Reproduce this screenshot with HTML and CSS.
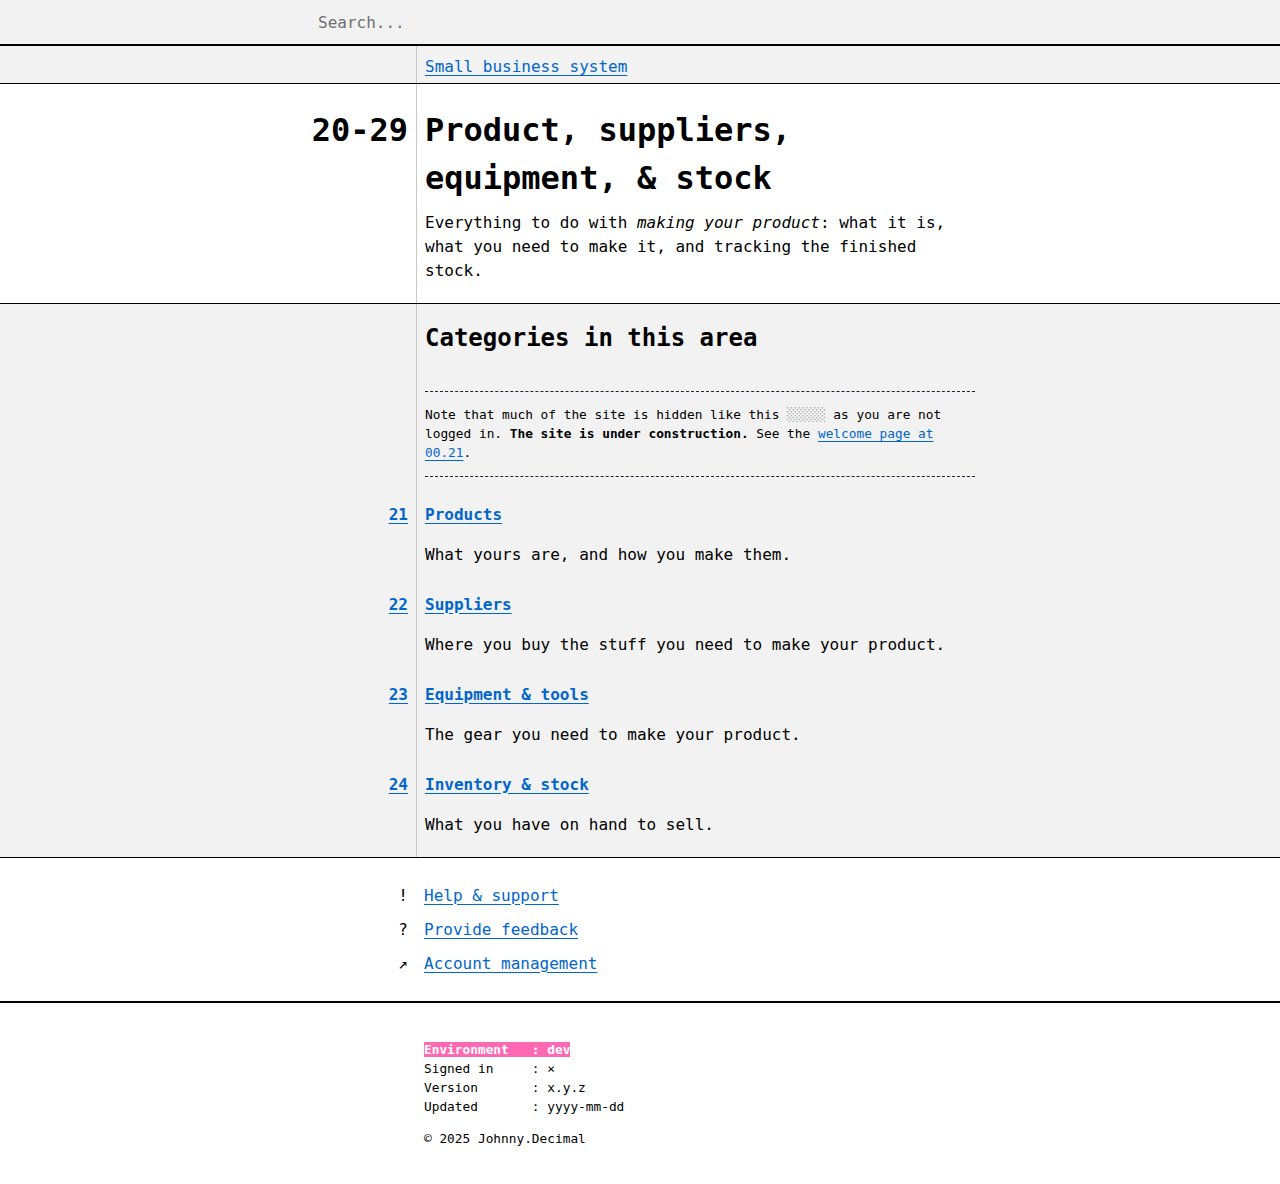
FILE: index.html
```html
<!DOCTYPE html>
<html lang="en">
<head>
<meta charset="utf-8">
<title>20-29 Product, suppliers, equipment, &amp; stock</title>
<link rel="stylesheet" href="styles.css">
</head>
<body>
<header class="search">
  <input class="search-input" type="text" placeholder="Search...">
</header>

<nav class="row crumbs">
  <div class="gutter"></div>
  <div class="main"><a href="#">Small business system</a></div>
</nav>

<section class="row area">
  <div class="gutter"><span class="area-num">20-29</span></div>
  <div class="main">
    <h1 class="title">Product, suppliers, equipment, &amp; stock</h1>
    <p class="lede">Everything to do with <em>making your product</em>: what it is, what you need to make it, and tracking the finished stock.</p>
  </div>
</section>

<section class="cats">
  <div class="row cats-head">
    <div class="gutter"></div>
    <div class="main">
      <h2 class="cats-title">Categories in this area</h2>
      <div class="notice">Note that much of the site is hidden like this <span class="hidden-mark">░░░░░</span> as you are not logged in. <strong>The site is under construction.</strong> See the <a href="#">welcome page at 00.21</a>.</div>
    </div>
  </div>
  <div class="row cat-item">
    <div class="gutter"><a class="cat-num" href="#">21</a></div>
    <div class="main"><a class="cat-link" href="#">Products</a><p>What yours are, and how you make them.</p></div>
  </div>
  <div class="row cat-item">
    <div class="gutter"><a class="cat-num" href="#">22</a></div>
    <div class="main"><a class="cat-link" href="#">Suppliers</a><p>Where you buy the stuff you need to make your product.</p></div>
  </div>
  <div class="row cat-item">
    <div class="gutter"><a class="cat-num" href="#">23</a></div>
    <div class="main"><a class="cat-link" href="#">Equipment &amp; tools</a><p>The gear you need to make your product.</p></div>
  </div>
  <div class="row cat-item last">
    <div class="gutter"><a class="cat-num" href="#">24</a></div>
    <div class="main"><a class="cat-link" href="#">Inventory &amp; stock</a><p>What you have on hand to sell.</p></div>
  </div>
</section>

<section class="links">
  <div class="link-row"><span class="link-icon">!</span><a href="#">Help &amp; support</a></div>
  <div class="link-row"><span class="link-icon">?</span><a href="#">Provide feedback</a></div>
  <div class="link-row"><span class="link-icon arrow">↗</span><a href="#">Account management</a></div>
</section>

<footer class="site-footer">
<pre class="meta"><span class="env">Environment   : dev</span>
Signed in     : ×
Version       : x.y.z
Updated       : yyyy-mm-dd</pre>
<p class="copy">© 2025 Johnny.Decimal</p>
</footer>
</body>
</html>
```

FILE: styles.css
```css
* { box-sizing: border-box; }

html, body {
  margin: 0;
  padding: 0;
  background: #fff;
  color: #000;
  font-family: "DejaVu Sans Mono", "Liberation Mono", monospace;
  font-size: 16px;
  line-height: 24px;
}

a { color: #0066cc; text-decoration: underline; text-underline-offset: 3px; }

.search {
  height: 46px;
  background: #f2f2f2;
  border-bottom: 2px solid #000;
  display: flex;
  align-items: center;
}
.search-input {
  margin-left: 310px;
  padding: 0 8px;
  border: none;
  background: transparent;
  font-family: inherit;
  font-size: 16px;
  height: 44px;
  width: 400px;
  outline: none;
}
.search-input::placeholder { color: #707070; }

.row {
  display: grid;
  grid-template-columns: 417px 1fr;
}
.gutter {
  border-right: 1px solid #c8c8c8;
  padding-right: 8px;
  text-align: right;
}
.main { padding-left: 8px; }

.crumbs {
  background: #f2f2f2;
  border-bottom: 1px solid #000;
}
.crumbs .main { padding-top: 9px; padding-bottom: 4px; }

.area { border-bottom: 1px solid #000; }
.area .gutter, .area .main { padding-top: 22px; padding-bottom: 20px; }
.area-num { font-size: 32px; line-height: 48px; font-weight: bold; }
.title {
  margin: 0;
  font-size: 32px;
  line-height: 48px;
  font-weight: bold;
  max-width: 550px;
}
.lede { margin: 9px 0 0; max-width: 550px; }

.cats {
  background: #f2f2f2;
  border-bottom: 1px solid #000;
}
.cats-head .main { padding-top: 16px; }
.cats-title {
  margin: 0;
  font-size: 24px;
  line-height: 36px;
  font-weight: bold;
}
.notice {
  margin-top: 35px;
  max-width: 550px;
  border-top: 1px dashed #223;
  border-bottom: 1px dashed #223;
  padding: 13px 0;
  font-size: 12.8px;
  line-height: 19.2px;
}
.hidden-mark { color: #999; }

.cat-item .gutter, .cat-item .main { padding-top: 26px; }
.cat-item.last .gutter, .cat-item.last .main { padding-bottom: 20px; }
.cat-num, .cat-link { font-weight: bold; }
.cat-item p { margin: 16px 0 0; }

.links {
  padding: 26px 0 25px;
  border-bottom: 2px solid #000;
  display: flex;
  flex-direction: column;
  gap: 10px;
}
.link-row {
  display: grid;
  grid-template-columns: 416px 1fr;
}
.link-icon { text-align: right; padding-right: 8px; }
.link-row a { justify-self: start; margin-left: 8px; }

.site-footer { padding: 37px 0 35px 424px; }
.meta {
  margin: 0;
  font-family: inherit;
  font-size: 12.8px;
  line-height: 19.2px;
}
.env { background: #ff69b4; color: #fff; font-weight: bold; }
.copy { margin: 12.8px 0 0; font-size: 12.8px; line-height: 19.2px; }
```
